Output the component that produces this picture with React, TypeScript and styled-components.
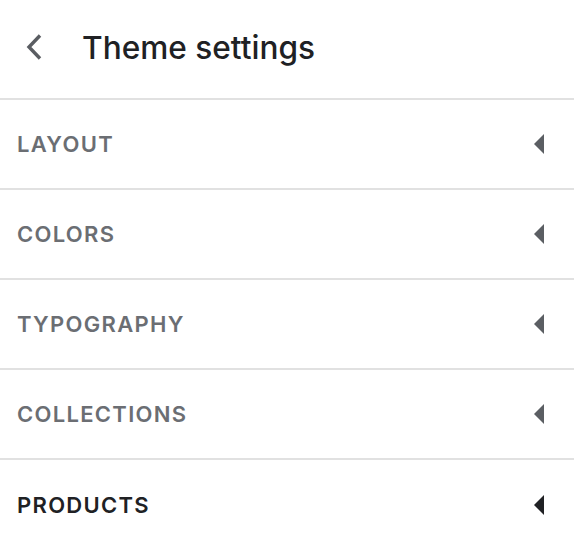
import React from 'react'
import styled, { createGlobalStyle } from 'styled-components'

const GlobalStyle = createGlobalStyle`
  body {
    margin: 0;
    background: #ffffff;
    font-family: Inter, "Noto Sans", sans-serif;
  }
`

const Panel = styled.div`
  width: 574px;
  background: #fff;
`

const Header = styled.div`
  display: flex;
  align-items: center;
  height: 100px;
  padding: 0 0 4px 26px;
  box-sizing: border-box;
  border-bottom: 2px solid #e1e1e1;
`

const BackButton = styled.button`
  display: flex;
  align-items: center;
  justify-content: center;
  width: 16px;
  height: 26px;
  padding: 0;
  margin-right: 40px;
  border: none;
  background: none;
  cursor: pointer;
`

const Title = styled.h1`
  margin: 0;
  font-size: 31.6px;
  font-weight: 500;
  color: #202124;
`

const Row = styled.div`
  display: flex;
  align-items: center;
  justify-content: space-between;
  height: 90px;
  padding: 0 30px 0 17px;
  box-sizing: border-box;
  border-bottom: 2px solid #e1e1e1;

  &:last-child {
    border-bottom: none;
  }
`

const Label = styled.span<{ $active?: boolean }>`
  font-size: 22px;
  font-weight: 600;
  letter-spacing: 1.3px;
  color: ${({ $active }) => ($active ? '#202124' : '#6b6e73')};
`

const Caret = styled.span<{ $active?: boolean }>`
  width: 0;
  height: 0;
  border-top: 10px solid transparent;
  border-bottom: 10px solid transparent;
  border-right: 10px solid ${({ $active }) => ($active ? '#202124' : '#5b5e63')};
`

const sections = ['LAYOUT', 'COLORS', 'TYPOGRAPHY', 'COLLECTIONS', 'PRODUCTS']

const App = () => {
  return (
    <Panel>
      <GlobalStyle />
      <Header>
        <BackButton aria-label="Back">
          <svg width="16" height="26" viewBox="0 0 16 26">
            <path d="M14 1.5 L3 13 L14 24.5" fill="none" stroke="#5a5d62" strokeWidth="3.4" />
          </svg>
        </BackButton>
        <Title>Theme settings</Title>
      </Header>
      {sections.map((s, i) => {
        const active = i === sections.length - 1
        return (
          <Row key={s}>
            <Label $active={active}>{s}</Label>
            <Caret $active={active} />
          </Row>
        )
      })}
    </Panel>
  )
}

export default App
